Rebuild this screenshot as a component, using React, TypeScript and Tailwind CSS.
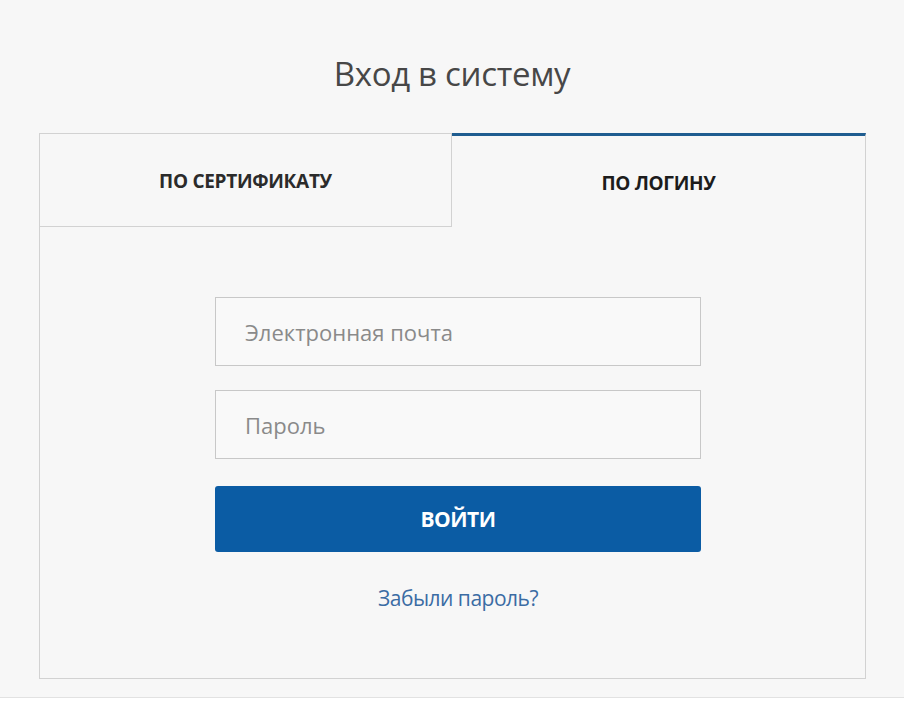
import React from "react";

const App = () => {
  return (
    <div className="h-[702px] w-[904px] bg-white" style={{ fontFamily: '"Open Sans", "Noto Sans", sans-serif' }}>
      <div className="h-[698px] bg-[#f7f7f7] border-b border-[#e2e2e2] pt-[50px]">
        <h1 className="text-center text-[33px] leading-[48px] font-normal text-[#474747] tracking-[-0.3px]">
          Вход в систему
        </h1>

        <div className="mt-[35px] ml-[39px] w-[827px]">
          {/* tabs */}
          <div className="flex h-[94px]">
            <div className="w-[413px] border border-[#d2d2d2] flex items-center justify-center pt-[3px]">
              <span className="text-[19px] font-bold text-[#2b2b2b] tracking-[-0.3px]">ПО СЕРТИФИКАТУ</span>
            </div>
            <div className="flex-1 border-t-[3px] border-t-[#1f5d90] border-r border-r-[#d2d2d2] flex items-center justify-center pt-[3px]">
              <span className="text-[19px] font-bold text-[#1c1c1c] tracking-[-0.3px]">ПО ЛОГИНУ</span>
            </div>
          </div>

          {/* login form */}
          <div className="h-[452px] border-x border-b border-[#d2d2d2] pl-[175px] pt-[70px]">
            <div className="w-[486px] flex flex-col">
              <input
                type="text"
                placeholder="Электронная почта"
                className="h-[69px] border border-[#c8c8c8] bg-[#f9f9f9] px-[29px] text-[22px] text-[#555] placeholder:text-[#8a8a8a] outline-none"
              />
              <input
                type="password"
                placeholder="Пароль"
                className="mt-[24px] h-[69px] border border-[#c8c8c8] bg-[#f9f9f9] px-[29px] text-[22px] text-[#555] placeholder:text-[#8a8a8a] outline-none"
              />
              <button
                type="submit"
                className="mt-[27px] h-[66px] rounded-[3px] bg-[#0b5ca4] text-white text-[21px] font-bold tracking-[-0.5px] pt-[2px]"
              >
                ВОЙТИ
              </button>
              <div className="mt-[31px] text-center">
                <a className="text-[21px] text-[#3b6ca4] tracking-[-0.5px] cursor-pointer">Забыли пароль?</a>
              </div>
            </div>
          </div>
        </div>
      </div>
    </div>
  );
};

export default App;
